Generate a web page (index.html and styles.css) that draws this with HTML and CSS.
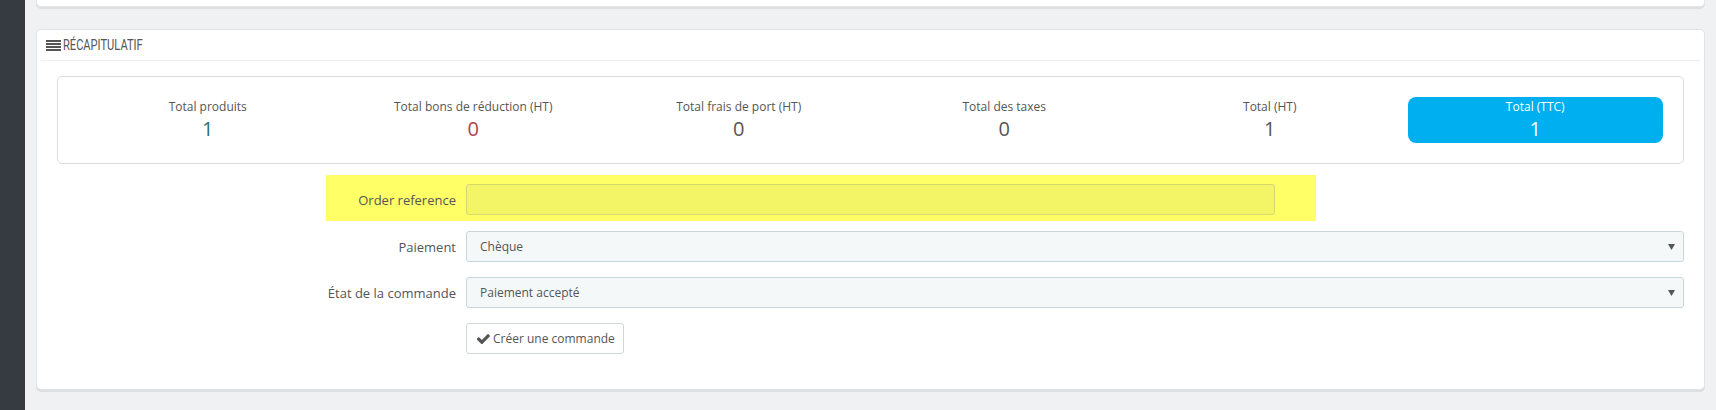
FILE: index.html
```html
<!DOCTYPE html>
<html lang="fr">
<head>
<meta charset="utf-8">
<title>Récapitulatif</title>
<link rel="stylesheet" href="styles.css">
</head>
<body>
<div class="sidebar"></div>
<main class="main">
  <div class="panel-stub"></div>
  <section class="panel">
    <div class="panel-heading">
      <svg class="icon-justify" width="15" height="11" viewBox="0 0 15 11" aria-hidden="true">
        <rect x="0" y="0" width="15" height="2" fill="#555"/>
        <rect x="0" y="3" width="15" height="2" fill="#555"/>
        <rect x="0" y="6" width="15" height="2" fill="#555"/>
        <rect x="0" y="9" width="15" height="2" fill="#555"/>
      </svg>
      <span class="heading-text">Récapitulatif</span>
    </div>
    <div class="kpis">
      <div class="kpi"><div class="focus"><span class="kpi-label">Total produits</span><span class="kpi-value success">1</span></div></div>
      <div class="kpi"><div class="focus"><span class="kpi-label">Total bons de réduction (HT)</span><span class="kpi-value danger">0</span></div></div>
      <div class="kpi"><div class="focus"><span class="kpi-label">Total frais de port (HT)</span><span class="kpi-value">0</span></div></div>
      <div class="kpi"><div class="focus"><span class="kpi-label">Total des taxes</span><span class="kpi-value">0</span></div></div>
      <div class="kpi"><div class="focus"><span class="kpi-label">Total (HT)</span><span class="kpi-value">1</span></div></div>
      <div class="kpi"><div class="focus primary"><span class="kpi-label">Total (TTC)</span><span class="kpi-value">1</span></div></div>
    </div>
    <div class="form">
      <div class="highlight">
        <label class="form-label">Order reference</label>
        <div class="input"></div>
      </div>
      <div class="form-row">
        <label class="form-label">Paiement</label>
        <div class="select"><span>Chèque</span>
          <svg class="caret" width="7" height="6" viewBox="0 0 7 6" aria-hidden="true"><path d="M0 0H7L3.5 6Z" fill="#555"/></svg>
        </div>
      </div>
      <div class="form-row">
        <label class="form-label">État de la commande</label>
        <div class="select"><span>Paiement accepté</span>
          <svg class="caret" width="7" height="6" viewBox="0 0 7 6" aria-hidden="true"><path d="M0 0H7L3.5 6Z" fill="#555"/></svg>
        </div>
      </div>
      <div class="form-row last">
        <span></span>
        <button class="btn" type="button">
          <svg class="check" width="13" height="10" viewBox="141 400 1530 1030" aria-hidden="true"><path fill="#555" d="M1671 566q0 40-28 68l-724 724-136 136q-28 28-68 28t-68-28l-136-136-362-362q-28-28-28-68t28-68l136-136q28-28 68-28t68 28l294 295 656-657q28-28 68-28t68 28l136 136q28 28 28 68z"/></svg>
          <span>Créer une commande</span>
        </button>
      </div>
    </div>
  </section>
</main>
</body>
</html>
```

FILE: styles.css
```css
html, body {
  margin: 0;
  height: 410px;
  overflow: hidden;
}
body {
  background: #eff1f2;
  font-family: "Open Sans", "DejaVu Sans", sans-serif;
  font-size: 12px;
  color: #555;
  display: flex;
}
.sidebar {
  width: 25px;
  flex: none;
  background: #363a41;
}
.main {
  flex: 1;
  min-width: 0;
  padding: 0 11px;
}
.panel-stub {
  height: 6px;
  background: #fff;
  border: 1px solid #e6e6e6;
  border-top: none;
  border-radius: 0 0 5px 5px;
  box-shadow: 0 2px 0 rgba(0, 0, 0, 0.08);
  margin-bottom: 22px;
}
.panel {
  background: #fff;
  border: 1px solid #e2e4e6;
  border-radius: 5px;
  box-shadow: 0 2px 0 rgba(0, 0, 0, 0.08);
  padding: 0 20px 20px;
}
.panel-heading {
  margin: 0 -16px 15px;
  height: 30px;
  border-bottom: 1px solid #eee;
  display: flex;
  align-items: center;
  padding-left: 5px;
}
.icon-justify {
  flex: none;
  margin-right: 2px;
}
.heading-text {
  display: inline-block;
  font-family: Roboto, "DejaVu Sans", sans-serif;
  font-size: 15px;
  text-transform: uppercase;
  color: #555;
  transform: scaleX(0.74);
  transform-origin: left center;
  white-space: nowrap;
}
.kpis {
  display: grid;
  grid-template-columns: repeat(6, 1fr);
  border: 1px solid #dcdcdc;
  border-radius: 5px;
  padding: 20px 15px 20px 17px;
}
.kpi {
  padding: 0 5px;
  text-align: center;
}
.focus {
  height: 46px;
  box-sizing: border-box;
  padding-top: 1px;
  border-radius: 8px;
}
.focus.primary {
  background: #00aff0;
  color: #fff;
}
.kpi-label {
  display: block;
  line-height: 17px;
}
.kpi-value {
  display: block;
  font-size: 20px;
  line-height: 28px;
}
.kpi-value.success {
  color: #2f6d6e;
}
.kpi-value.danger {
  color: #a9444a;
}
.highlight {
  margin: 11px 0 10px 269px;
  width: 990px;
  box-sizing: border-box;
  background: #ffff66;
  padding: 9px 41px 6px 0;
  display: grid;
  grid-template-columns: 130px 1fr;
  column-gap: 10px;
  align-items: center;
}
.form-row {
  display: grid;
  grid-template-columns: 399px 1fr;
  column-gap: 10px;
  align-items: center;
  margin-bottom: 15px;
}
.form-row.last {
  margin-bottom: 15px;
}
.form-label {
  text-align: right;
  font-size: 13px;
  color: #555;
}
.input {
  height: 31px;
  box-sizing: border-box;
  background: #f4f566;
  border: 1px solid #d2d86e;
  border-radius: 3px;
}
.select {
  height: 31px;
  box-sizing: border-box;
  background: #f5f8f9;
  border: 1px solid #c7d6db;
  border-radius: 3px;
  display: flex;
  align-items: center;
  justify-content: space-between;
  padding: 0 8px 0 13px;
}
.btn {
  justify-self: start;
  height: 31px;
  display: inline-flex;
  align-items: center;
  gap: 3px;
  padding: 0 8px 0 10px;
  background: #fff;
  border: 1px solid #d0d5d8;
  border-radius: 3px;
  font: inherit;
  color: #555;
  cursor: pointer;
}
```
